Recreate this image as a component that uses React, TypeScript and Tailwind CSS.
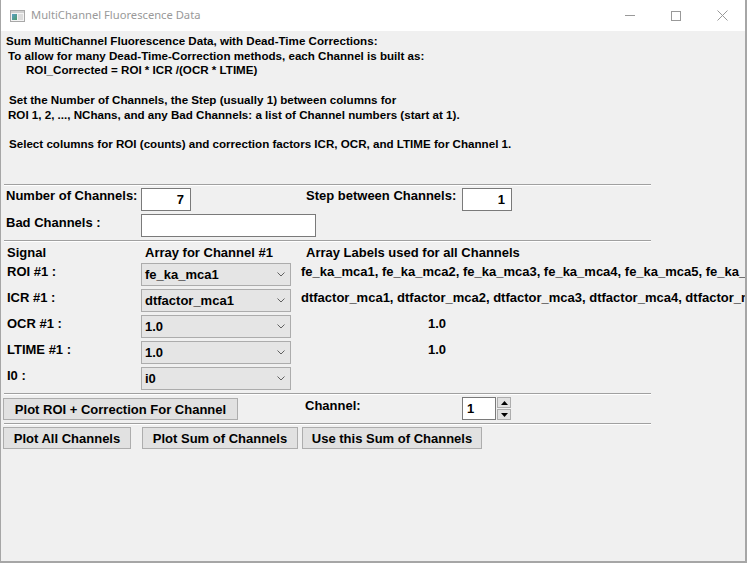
import React from "react";

const body = "font-['Liberation_Sans',Arial,sans-serif] font-bold text-black";

function Sep() {
  return (
    <div className="ml-[3px] w-[647px] shrink-0">
      <div className="h-px bg-[#a0a0a0]" />
      <div className="h-px bg-white" />
    </div>
  );
}

function Entry({ value, className }: { value: string; className: string }) {
  return (
    <div
      className={`h-[23px] shrink-0 bg-white border border-[#7a7a7a] flex items-center justify-end pr-[6px] text-[13px] leading-none ${className}`}
    >
      {value}
    </div>
  );
}

function Combo({ value }: { value: string }) {
  return (
    <div className="w-[150px] h-[23px] shrink-0 bg-[#e5e5e5] border border-[#acacac] flex items-center justify-between pl-[3px] pr-[5px] text-[13px] leading-none">
      <span>{value}</span>
      <svg width="8" height="5" viewBox="0 0 8 5">
        <polyline points="0.5,0.5 4,4 7.5,0.5" fill="none" stroke="#606060" strokeWidth="1" />
      </svg>
    </div>
  );
}

function Btn({ label, className }: { label: string; className: string }) {
  return (
    <button
      className={`h-[22px] shrink-0 bg-[#e1e1e1] border border-[#adadad] flex items-center justify-center text-[13px] leading-none ${className}`}
    >
      {label}
    </button>
  );
}

const signals = [
  { label: "ROI #1 :", value: "fe_ka_mca1", right: "fe_ka_mca1, fe_ka_mca2, fe_ka_mca3, fe_ka_mca4, fe_ka_mca5, fe_ka_mca6, fe_ka_mca7", pad: "ml-[10px]" },
  { label: "ICR #1 :", value: "dtfactor_mca1", right: "dtfactor_mca1, dtfactor_mca2, dtfactor_mca3, dtfactor_mca4, dtfactor_mca5, dtfactor_mca6", pad: "ml-[10px]" },
  { label: "OCR #1 :", value: "1.0", right: "1.0", pad: "ml-[137px]" },
  { label: "LTIME #1 :", value: "1.0", right: "1.0", pad: "ml-[137px]" },
  { label: "I0 :", value: "i0", right: "", pad: "ml-[10px]" },
];

export default function App() {
  return (
    <div className="w-[747px] h-[563px] overflow-hidden flex flex-col bg-white border-l border-r-2 border-b-2 border-[#a6a6a6]">
      {/* Title bar */}
      <div className="h-[31px] shrink-0 bg-white flex items-center">
        <svg className="ml-[9px]" width="15" height="12" viewBox="0 0 15 12">
          <defs>
            <linearGradient id="ic" x1="0" y1="0" x2="1" y2="1">
              <stop offset="0" stopColor="#5aa0c8" />
              <stop offset="1" stopColor="#4c9a6a" />
            </linearGradient>
          </defs>
          <rect x="0.5" y="0.5" width="14" height="11" fill="#f4f4f4" stroke="#a8a8a8" />
          <rect x="1" y="1" width="13" height="2" fill="#d0d0d0" />
          <rect x="2" y="4" width="5" height="6" fill="url(#ic)" />
          <rect x="8" y="4" width="5" height="6" fill="#dcdcdc" />
        </svg>
        <span className="ml-[6px] text-[11.2px] text-[#999999] font-['Noto_Sans',sans-serif]">
          MultiChannel Fluorescence Data
        </span>
        <div className="ml-auto flex items-center h-full">
          <div className="w-[46px] h-full flex items-center justify-center">
            <div className="w-[10px] h-px bg-[#999999]" />
          </div>
          <div className="w-[46px] h-full flex items-center justify-center">
            <div className="w-[10px] h-[10px] border border-[#999999]" />
          </div>
          <div className="w-[46px] h-full flex items-center justify-center">
            <svg width="11" height="11" viewBox="0 0 11 11">
              <path d="M0.5 0.5 L10.5 10.5 M10.5 0.5 L0.5 10.5" stroke="#999999" strokeWidth="1" />
            </svg>
          </div>
        </div>
      </div>

      {/* Body */}
      <div className={`flex-1 flex flex-col bg-[#f0f0f0] ${body}`}>
        <div className="h-[153px] shrink-0 pt-[3px] text-[11.6px] leading-[14.7px] whitespace-pre">
          <div className="pl-[5px]">Sum MultiChannel Fluorescence Data, with Dead-Time Corrections:</div>
          <div className="pl-[7px]">To allow for many Dead-Time-Correction methods, each Channel is built as:</div>
          <div className="pl-[25px]">ROI_Corrected = ROI * ICR /(OCR * LTIME)</div>
          <div>&nbsp;</div>
          <div className="pl-[8px]">Set the Number of Channels, the Step (usually 1) between columns for</div>
          <div className="pl-[7px]">ROI 1, 2, ..., NChans, and any Bad Channels: a list of Channel numbers (start at 1).</div>
          <div>&nbsp;</div>
          <div className="pl-[8px]">Select columns for ROI (counts) and correction factors ICR, OCR, and LTIME for Channel 1.</div>
        </div>

        <Sep />

        <div className="mt-[2px] flex items-start text-[13px] leading-[15px]">
          <div className="ml-[5px] w-[135px] shrink-0">Number of Channels:</div>
          <Entry value="7" className="w-[50px]" />
          <div className="ml-[115px] w-[156px] shrink-0">Step between Channels:</div>
          <Entry value="1" className="w-[50px]" />
        </div>

        <div className="mt-[3px] flex items-start text-[13px] leading-[15px]">
          <div className="ml-[5px] w-[135px] shrink-0 pt-[1px]">Bad Channels :</div>
          <div className="w-[175px] h-[23px] shrink-0 bg-white border border-[#7a7a7a]" />
        </div>

        <div className="mt-[3px]">
          <Sep />
        </div>

        <div className="mt-[3px] h-[15px] flex text-[13px] leading-[15px]">
          <div className="ml-[6px] w-[138px] shrink-0">Signal</div>
          <div className="w-[161px] shrink-0">Array for Channel #1</div>
          <div>Array Labels used for all Channels</div>
        </div>

        <div className="mt-[3px] flex flex-col gap-[3px]">
          {signals.map((s) => (
            <div key={s.label} className="flex items-start text-[13px] leading-[15px]">
              <div className="ml-[6px] w-[134px] shrink-0 pt-[1px]">{s.label}</div>
              <Combo value={s.value} />
              <div className={`${s.pad} pt-[1px] whitespace-nowrap`}>{s.right}</div>
            </div>
          ))}
        </div>

        <div className="mt-[3px]">
          <Sep />
        </div>

        <div className="mt-[2px] flex items-start text-[13px] leading-[15px]">
          <Btn label="Plot ROI + Correction For Channel" className="ml-[2px] mt-[1px] w-[235px]" />
          <div className="ml-[67px] w-[157px] shrink-0 pt-[1px]">Channel:</div>
          <div className="w-[34px] h-[23px] shrink-0 bg-white border border-[#7a7a7a] flex items-center pl-[4px]">1</div>
          <div className="ml-[1px] flex flex-col gap-px">
            <div className="w-[14px] h-[11px] bg-[#e1e1e1] border border-[#adadad] flex items-center justify-center">
              <svg width="7" height="4" viewBox="0 0 7 4"><polygon points="3.5,0 7,4 0,4" fill="#000" /></svg>
            </div>
            <div className="w-[14px] h-[11px] bg-[#e1e1e1] border border-[#adadad] flex items-center justify-center">
              <svg width="7" height="4" viewBox="0 0 7 4"><polygon points="0,0 7,0 3.5,4" fill="#000" /></svg>
            </div>
          </div>
        </div>

        <div className="mt-[3px]">
          <Sep />
        </div>

        <div className="mt-[2px] flex items-start">
          <Btn label="Plot All Channels" className="ml-[2px] w-[128px]" />
          <Btn label="Plot Sum of Channels" className="ml-[11px] w-[156px]" />
          <Btn label="Use this Sum of Channels" className="ml-[4px] w-[180px]" />
        </div>
      </div>
    </div>
  );
}
